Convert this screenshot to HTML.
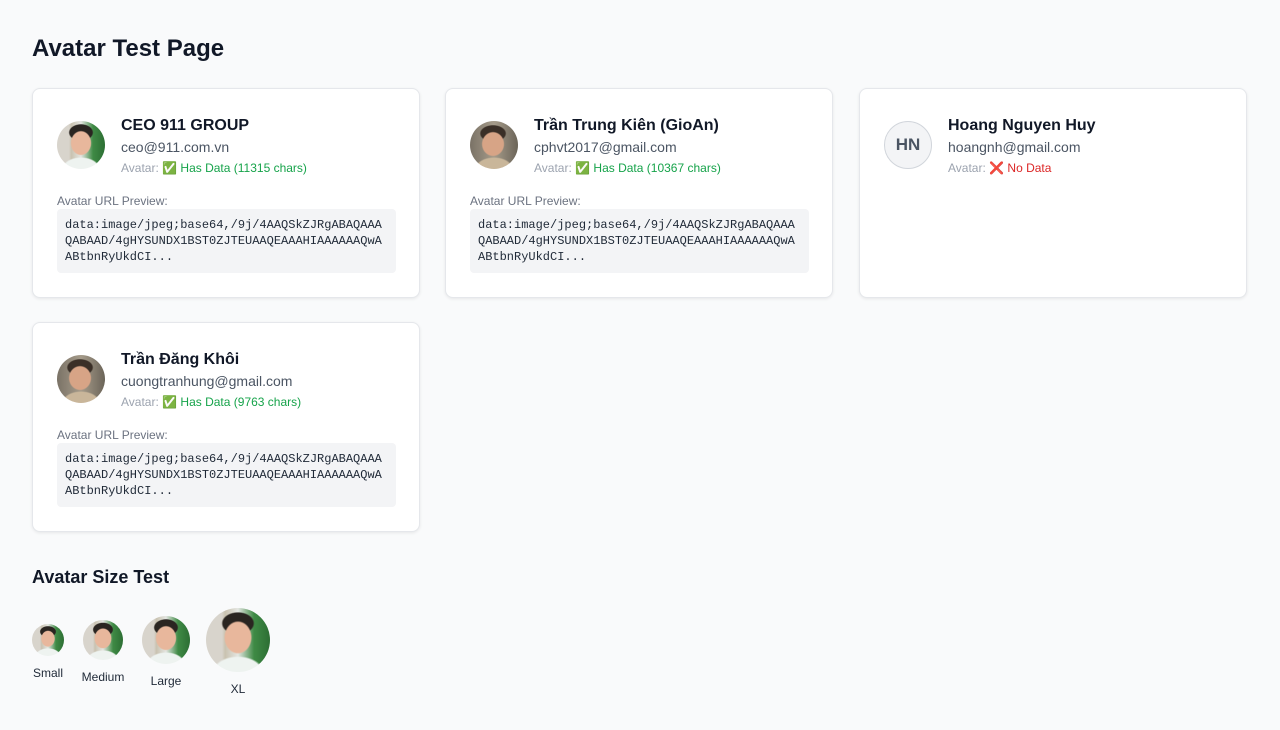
<!DOCTYPE html>
<html><head><meta charset="utf-8"><style>
body{margin:0;background:#f9fafb;font-family:"Liberation Sans","Noto Sans CJK SC",sans-serif;color:#111827;width:1280px;height:730px;position:relative;overflow:hidden}
h1{position:absolute;left:32px;top:33px;margin:0;font-size:24px;font-weight:700;line-height:32px}
.card{position:absolute;width:386px;height:208px;background:#fff;border:1px solid #e5e7eb;border-radius:8px;box-shadow:0 1px 3px rgba(0,0,0,.08)}
.av{position:absolute;border-radius:50%;overflow:hidden;background:
radial-gradient(ellipse 22% 26% at 50% 46%,#e8b79c 0 90%,transparent 100%),
radial-gradient(ellipse 26% 18% at 50% 24%,#2a2521 0 90%,transparent 100%),
radial-gradient(ellipse 40% 25% at 50% 100%,#eef3f0 0 90%,transparent 100%),
linear-gradient(90deg,#d8d4cc 0 25%,#c9c2b0 30%,#e4e6e2 50%,#3f8a45 75%,#2c6e33 100%)}
.kid{background:
radial-gradient(ellipse 24% 26% at 48% 48%,#d7a486 0 90%,transparent 100%),
radial-gradient(ellipse 28% 18% at 48% 26%,#3a2f27 0 90%,transparent 100%),
radial-gradient(ellipse 40% 25% at 50% 100%,#c9b69a 0 90%,transparent 100%),
linear-gradient(90deg,#7a7266,#a59b8a 50%,#6b6458)}
.ini{position:absolute;border-radius:50%;background:#f3f4f6;border:1px solid #d1d5db;box-sizing:border-box;color:#4b5563;font-size:17px;font-weight:600;display:flex;align-items:center;justify-content:center}
.nm{position:absolute;left:88px;top:26px;font-size:16px;font-weight:700;line-height:22px}
.em{position:absolute;left:88px;top:48px;font-size:14px;color:#4b5563;line-height:20px}
.st{position:absolute;left:88px;top:71px;font-size:12px;color:#9ca3af;line-height:16px}
.ok{color:#16a34a}.no{color:#dc2626}
.lb{position:absolute;left:24px;top:104px;font-size:12px;color:#6b7280;line-height:16px}
.code{position:absolute;left:24px;top:120px;width:323px;height:48px;padding:8px;background:#f3f4f6;border-radius:4px;font-family:"Liberation Mono",monospace;font-size:12px;line-height:16px;color:#1f2937;word-break:break-all}
h2{position:absolute;left:32px;top:565px;margin:0;font-size:18px;font-weight:700;line-height:24px}
.sl{position:absolute;font-size:12px;color:#1f2937;text-align:center;width:60px}
</style></head><body>
<h1>Avatar Test Page</h1>

<div class="card" style="left:32px;top:88px">
<div class="av" style="left:24px;top:32px;width:48px;height:48px"></div>
<div class="nm">CEO 911 GROUP</div><div class="em">ceo@911.com.vn</div>
<div class="st">Avatar: <span class="ok">✅ Has Data (11315 chars)</span></div>
<div class="lb">Avatar URL Preview:</div>
<div class="code">data:image/jpeg;base64,/9j/4AAQSkZJRgABAQAAAQABAAD/4gHYSUNDX1BST0ZJTEUAAQEAAAHIAAAAAAQwAABtbnRyUkdCI...</div>
</div>

<div class="card" style="left:445px;top:88px">
<div class="av kid" style="left:24px;top:32px;width:48px;height:48px"></div>
<div class="nm">Trần Trung Kiên (GioAn)</div><div class="em">cphvt2017@gmail.com</div>
<div class="st">Avatar: <span class="ok">✅ Has Data (10367 chars)</span></div>
<div class="lb">Avatar URL Preview:</div>
<div class="code">data:image/jpeg;base64,/9j/4AAQSkZJRgABAQAAAQABAAD/4gHYSUNDX1BST0ZJTEUAAQEAAAHIAAAAAAQwAABtbnRyUkdCI...</div>
</div>

<div class="card" style="left:859px;top:88px">
<div class="ini" style="left:24px;top:32px;width:48px;height:48px">HN</div>
<div class="nm">Hoang Nguyen Huy</div><div class="em">hoangnh@gmail.com</div>
<div class="st">Avatar: <span class="no">❌ No Data</span></div>
</div>

<div class="card" style="left:32px;top:322px">
<div class="av kid" style="left:24px;top:32px;width:48px;height:48px"></div>
<div class="nm">Trần Đăng Khôi</div><div class="em">cuongtranhung@gmail.com</div>
<div class="st">Avatar: <span class="ok">✅ Has Data (9763 chars)</span></div>
<div class="lb">Avatar URL Preview:</div>
<div class="code">data:image/jpeg;base64,/9j/4AAQSkZJRgABAQAAAQABAAD/4gHYSUNDX1BST0ZJTEUAAQEAAAHIAAAAAAQwAABtbnRyUkdCI...</div>
</div>

<h2>Avatar Size Test</h2>
<div class="av" style="left:32px;top:624px;width:32px;height:32px"></div>
<div class="sl" style="left:18px;top:666px">Small</div>
<div class="av" style="left:83px;top:620px;width:40px;height:40px"></div>
<div class="sl" style="left:73px;top:670px">Medium</div>
<div class="av" style="left:142px;top:616px;width:48px;height:48px"></div>
<div class="sl" style="left:136px;top:674px">Large</div>
<div class="av" style="left:206px;top:608px;width:64px;height:64px"></div>
<div class="sl" style="left:208px;top:682px">XL</div>
</body></html>
